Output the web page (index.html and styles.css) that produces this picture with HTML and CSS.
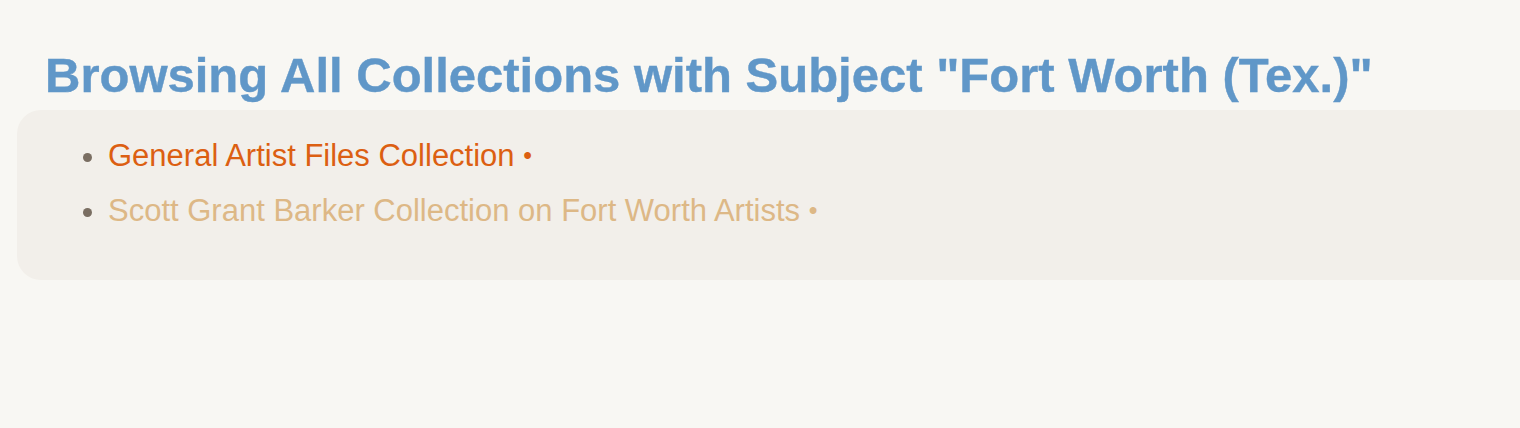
FILE: index.html
```html
<!DOCTYPE html>
<html lang="en">
<head>
<meta charset="utf-8">
<title>Browsing All Collections</title>
<link rel="stylesheet" href="styles.css">
</head>
<body>
<main class="page">
  <h1 class="title">Browsing All Collections with Subject "Fort Worth (Tex.)"</h1>
  <section class="panel">
    <ul class="list">
      <li class="item"><a class="link" href="#">General Artist Files Collection</a> <span class="sep">•</span></li>
      <li class="item"><a class="link visited" href="#">Scott Grant Barker Collection on Fort Worth Artists</a> <span class="sep">•</span></li>
    </ul>
  </section>
</main>
</body>
</html>
```
FILE: styles.css
```css
html, body {
  margin: 0;
  padding: 0;
  background: #f8f7f3;
  overflow: hidden;
}
body {
  font-family: "Liberation Sans", Arial, Helvetica, sans-serif;
}
.page {
  width: 100%;
}
.title {
  margin: 47px 0 7px;
  padding-left: 45px;
  font-size: 49px;
  line-height: 56px;
  font-weight: bold;
  color: #6097c8;
  white-space: nowrap;
  -webkit-text-stroke: 0.4px #6097c8;
}
.panel {
  margin-left: 17px;
  margin-right: -60px;
  background: #f2efea;
  border-radius: 24px;
  padding: 28px 0 51px 91px;
}
.list {
  margin: 0;
  padding: 0;
  list-style: disc;
  color: #7a6e62;
}
.item {
  font-size: 31px;
  line-height: 36px;
}
.item + .item {
  margin-top: 19px;
}
.link {
  color: #dc5f12;
  text-decoration: none;
}
.link.visited {
  color: #ddb886;
}
.sep {
  color: #dc5f12;
  font-size: 25px;
  line-height: 0;
  vertical-align: 2px;
}
.visited + .sep {
  color: #ddb886;
}
```
